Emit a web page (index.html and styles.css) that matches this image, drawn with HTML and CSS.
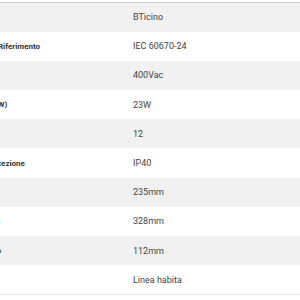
FILE: index.html
```html
<!DOCTYPE html>
<html lang="it">
<head>
<meta charset="utf-8">
<link rel="stylesheet" href="styles.css">
</head>
<body>
<div class="frame">
<table class="specs">
<tbody>
<tr><th>Marca</th><td>BTicino</td></tr>
<tr><th>Norma di Riferimento</th><td>IEC 60670-24</td></tr>
<tr><th>Tensione</th><td>400Vac</td></tr>
<tr><th>Potenza (W)</th><td>23W</td></tr>
<tr><th>Moduli</th><td>12</td></tr>
<tr><th>Grado protezione</th><td>IP40</td></tr>
<tr><th>Altezza</th><td>235mm</td></tr>
<tr><th>Larghezza</th><td>328mm</td></tr>
<tr><th>Profondità</th><td>112mm</td></tr>
<tr><th>Serie</th><td>Linea habita</td></tr>
</tbody>
</table>
</div>
</body>
</html>
```
FILE: styles.css
```css
html, body {
  margin: 0;
  padding: 0;
  background: #ffffff;
}
.frame {
  padding-top: 2px;
  overflow: hidden;
  width: 300px;
}
.specs {
  border-collapse: collapse;
  margin-left: -45px;
  width: 345px;
  border-top: 1px solid #d0d0d0;
  border-bottom: 1px solid #e6e6e6;
  font-family: Roboto, "Liberation Sans", sans-serif;
  font-size: 9px;
}
.specs tr {
  height: 29.2px;
}
.specs tr:nth-child(odd) {
  background: #f1f1f1;
}
.specs th {
  width: 162px;
  padding: 0 0 0 8px;
  text-align: left;
  font-size: 8px;
  font-weight: 700;
  color: #333333;
  white-space: nowrap;
}
.specs td {
  padding: 0 0 0 8px;
  color: #444444;
  white-space: nowrap;
}
```
